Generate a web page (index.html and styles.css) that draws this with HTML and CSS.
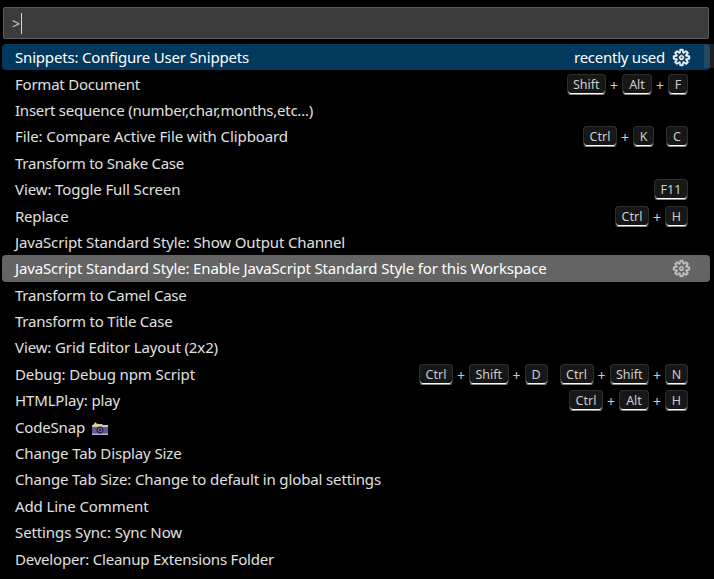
FILE: index.html
```html
<!DOCTYPE html>
<html lang="en">
<head>
<meta charset="utf-8">
<title>Command Palette</title>
<link rel="stylesheet" href="styles.css">
</head>
<body>
<svg class="sprites" aria-hidden="true">
  <symbol id="gear" viewBox="0 0 16 16">
    <path fill="currentColor" stroke="currentColor" stroke-width=".5" fill-rule="evenodd" d="M9.1 4.4L8.6 2H7.4l-.5 2.400-.7.3-2-1.3-.9.8 1.3 2-.2.7-2.400.5v1.200l2.400.5.3.8-1.3 2 .8.8 2-1.3.8.3.4 2.300h1.200l.5-2.400.8-.3 2 1.300.8-.8-1.300-2 .3-.8 2.300-.4V7.400l-2.400-.5-.3-.8 1.300-2-.8-.8-2 1.300-.7-.2zM9.400 1l.5 2.400L12 2.100l2 2-1.400 2.100 2.400.4v2.800l-2.400.5L14 12l-2 2-2.100-1.400-.5 2.400H6.600l-.5-2.400L4 13.900l-2-2 1.400-2.100L1 9.400V6.600l2.400-.5L2.100 4l2-2 2.100 1.400.4-2.400h2.800zm.6 7c0 1.100-.9 2-2 2s-2-.9-2-2 .9-2 2-2 2 .9 2 2zM8 9c.6 0 1-.4 1-1s-.4-1-1-1-1 .4-1 1 .4 1 1 1z"/>
  </symbol>
  <symbol id="camera" viewBox="0 0 16 14">
    <path fill="#c7c5d3" d="M0 3h5l1-1h4l1 1h5v3H0z"/>
    <path fill="#635994" d="M0 5h16v7H0z"/>
    <path fill="#b6b1ce" d="M0 11.500h16V13H0z"/>
    <circle cx="8" cy="8" r="3.500" fill="#292536"/>
    <circle cx="8" cy="8" r="2.300" fill="#71699b"/>
    <circle cx="8" cy="8" r="1.200" fill="#27223d"/>
    <path fill="#ffd23e" d="M3.500 0l1 1.500L6.500 2 5.200 3.500 4.500 5 3 4 .5 3.500 2 2z"/>
  </symbol>
</svg>
<main class="palette">
  <div class="input"><span class="prompt">&gt;</span><span class="caret"></span></div>
  <div class="list" id="list"></div>
  <div class="scrollbar"></div>
</main>
<script src="palette.js"></script>
</body>
</html>
```
FILE: styles.css
```css
* { box-sizing: border-box; }

body {
  margin: 0;
  background: #000;
  color: #e0e0e0;
  font: 15px "Noto Sans", "Open Sans", sans-serif;
}

.sprites { display: none; }

.palette {
  position: relative;
  width: 714px;
  height: 579px;
  overflow: hidden;
  padding: 7px 4px 0 2px;
}

.input {
  display: flex;
  align-items: center;
  height: 32px;
  margin: 0 5px 5px 1px;
  width: 706px;
  padding-left: 8px;
  background: #3c3c3c;
  border: 1px solid #5c5c5c;
  border-radius: 2px;
}

.prompt { width: 9px; padding-top: 2px; font-size: 14px; color: #ccc; line-height: 1; }
.caret { width: 1px; height: 21px; background: #d4d4d4; }

.row {
  display: flex;
  align-items: center;
  justify-content: space-between;
  height: 26.4px;
  padding: 0 22px 0 13px;
  border-radius: 4px;
  white-space: nowrap;
}

.row.focused { background: #04395e; color: #fff; }
.row.hovered { background: #646464; color: #fff; }

.label { line-height: 26px; }
.camera { width: 16px; height: 14px; margin-left: 7px; vertical-align: -3px; }

.actions { display: flex; align-items: center; gap: 7px; }
.gear { width: 19px; height: 19px; margin-right: -3px; }
.hovered .gear { color: #c4c4c4; }

.keys { display: flex; gap: 12px; margin-top: 1px; font-size: 12.5px; color: #ccc; }
.chord { display: flex; align-items: center; }
.plus { width: 16px; padding-top: 2px; text-align: center; font-size: 14px; line-height: 19px; }

.key {
  display: flex;
  align-items: center;
  justify-content: center;
  width: 23px;
  height: 21px;
  background: #171717;
  border: 1px solid #2e2e2e;
  border-bottom-color: #888;
  border-radius: 4px;
  box-shadow: inset 0 -1px 0 #fff;
  line-height: 17px;
}
.key-ctrl, .key-f11 { width: 34px; }
.key-shift { width: 39.5px; }
.key-alt { width: 30px; }
.key-f { width: 20px; }
.key-k { width: 21px; }
.key-c { width: 22px; }

.scrollbar {
  position: absolute;
  top: 44px;
  right: 0;
  width: 10px;
  height: 24px;
  background: rgba(121, 121, 121, .25);
}
```
FILE: palette.js
```js
// Each command: label, label width in pixels, key bindings.
const commands = [
  ["Snippets: Configure User Snippets", 234],
  ["Format Document", 125, "Shift+Alt+F"],
  ["Insert sequence (number,char,months,etc...)", 298],
  ["File: Compare Active File with Clipboard", 273, "Ctrl+K C"],
  ["Transform to Snake Case", 169],
  ["View: Toggle Full Screen", 165.5, "F11"],
  ["Replace", 53.5, "Ctrl+H"],
  ["JavaScript Standard Style: Show Output Channel", 330],
  ["JavaScript Standard Style: Enable JavaScript Standard Style for this Workspace", 531.5],
  ["Transform to Camel Case", 171.5],
  ["Transform to Title Case", 157.5],
  ["View: Grid Editor Layout (2x2)", 203],
  ["Debug: Debug npm Script", 180, "Ctrl+Shift+D Ctrl+Shift+N"],
  ["HTMLPlay: play", 105, "Ctrl+Alt+H"],
  ["CodeSnap", 70],
  ["Change Tab Display Size", 166.5],
  ["Change Tab Size: Change to default in global settings", 366],
  ["Add Line Comment", 133.5],
  ["Settings Sync: Sync Now", 167],
  ["Developer: Cleanup Extensions Folder", 259]
];

const gear = '<svg class="gear"><use href="#gear"/></svg>';
const camera = '<svg class="camera"><use href="#camera"/></svg>';
const chord = text => '<span class="chord">' + text.split("+")
  .map(k => `<span class="key key-${k.toLowerCase()}">${k}</span>`)
  .join('<span class="plus">+</span>') + "</span>";

const list = document.getElementById("list");
commands.forEach(([label, width, keys], i) => {
  const row = document.createElement("div");
  row.className = "row" + (i === 0 ? " focused" : i === 8 ? " hovered" : "");
  let side = "";
  if (keys) side = `<span class="keys">${keys.split(" ").map(chord).join("")}</span>`;
  if (i === 0) side = `<span class="actions"><span class="recent">recently used</span>${gear}</span>`;
  if (i === 8) side = `<span class="actions">${gear}</span>`;
  row.innerHTML = `<span class="label"><span class="text">${label}</span>${label === "CodeSnap" ? camera : ""}</span>${side}`;
  list.append(row);
  fit(row.querySelector(".text"), width);
});
fit(document.querySelector(".recent"), 91);

function fit(el, width) {
  const natural = el.getBoundingClientRect().width;
  el.style.letterSpacing = (width - natural) / el.textContent.length + "px";
}
```
